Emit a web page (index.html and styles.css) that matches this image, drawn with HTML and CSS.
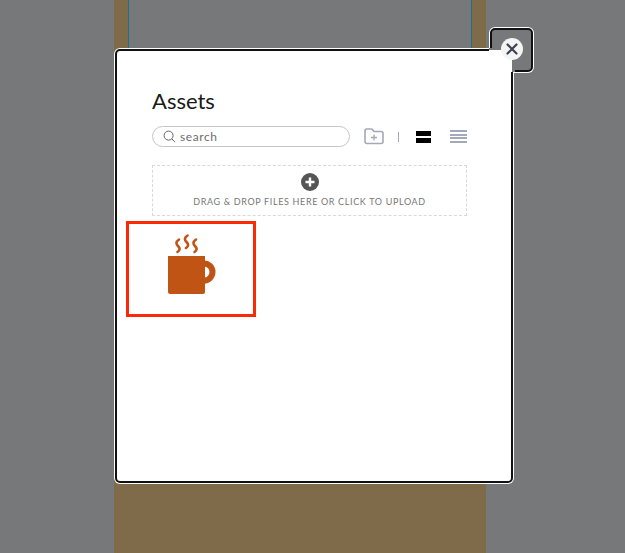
FILE: index.html
```html
<!DOCTYPE html>
<html lang="en">
<head>
    <meta charset="UTF-8">
    <meta name="viewport" content="width=device-width, initial-scale=1.0">
    <title>Assets</title>
    <link rel="stylesheet" href="styles.css">
</head>
<body>
    <div class="page">
        <div class="column">
            <div class="column-inner"></div>
        </div>
    </div>

    <div class="close-tab"></div>

    <div class="modal">
        <h1 class="modal-title">Assets</h1>

        <div class="toolbar">
            <div class="search">
                <svg width="13" height="13" viewBox="0 0 13 13"><circle cx="5.600" cy="5.600" r="4.500" stroke="#666" stroke-width="1" fill="none"/><path d="M9 9l3 3.200" stroke="#666" stroke-width="1" fill="none"/></svg>
                <span>search</span>
            </div>
            <svg class="folder" width="20" height="17" viewBox="0 0 20 17"><path d="M1 13.500V3A2 2 0 0 1 3 1h4.500a1 1 0 0 1 .8.4L10 3.500h7a2 2 0 0 1 2 2v8a2 2 0 0 1-2 2H3a2 2 0 0 1-2-2z" stroke="#a3a8ba" stroke-width="1.600" fill="none"/><path d="M10 6.500v6M7 9.500h6" stroke="#a3a8ba" stroke-width="1.300" fill="none"/></svg>
            <span class="divider"></span>
            <div class="view-large"><span></span><span></span></div>
            <div class="view-list"><span></span><span></span><span></span><span></span></div>
        </div>

        <div class="dropzone">
            <svg width="18" height="18" viewBox="0 0 18 18"><circle cx="9" cy="9" r="9" fill="#555"/><path d="M9 4.500v9M4.500 9h9" stroke="#fff" stroke-width="2.400"/></svg>
            <span>DRAG &amp; DROP FILES HERE OR CLICK TO UPLOAD</span>
        </div>

        <div class="asset">
            <svg width="48" height="61" viewBox="0 0 48 61">
                <g stroke="#c05415" stroke-width="2.600" fill="none" stroke-linecap="round">
                    <path d="M11 5.500c-3.500 2.500-3 4.500-1 6.500s2.500 4-.5 6"/>
                    <path d="M19.500 1.500c-3.500 2.500-3 4.500-1 6.500s2.500 4-.5 6"/>
                    <path d="M28 5.500c-3.500 2.500-3 4.500-1 6.500s2.500 4-.5 6"/>
                </g>
                <path d="M0 22h37v36a2 2 0 0 1-2 2H2a2 2 0 0 1-2-2z" fill="#c05415"/>
                <path d="M36 26.500a11.500 11.500 0 0 1 0 23v-6a5.500 5.500 0 0 0 0-11z" fill="#c05415"/>
            </svg>
        </div>
    </div>

    <button class="close-btn" type="button" aria-label="Close">
        <svg width="12" height="12" viewBox="0 0 12 12"><path d="M1.500 1.500l9 9M10.500 1.500l-9 9" stroke="#3b4252" stroke-width="2.200" stroke-linecap="round" fill="none"/></svg>
    </button>
</body>
</html>
```

FILE: styles.css
```css
* {
    margin: 0;
    padding: 0;
    box-sizing: border-box;
}

html, body {
    height: 100%;
    overflow: hidden;
}

body {
    font-family: 'Lato', sans-serif;
    background-color: #76787a;
}

/* Dimmed page behind the modal */
.page {
    height: 100%;
    padding-left: 114px;
}

.column {
    width: 372px;
    height: 100%;
    background-color: #7f6a4a;
}

.column-inner {
    width: 344px;
    height: 48px;
    margin: 0 auto;
    background-color: #76787a;
    border-left: 1px solid #1f6f8f;
    border-right: 1px solid #1f6f8f;
}

/* Modal */
.modal {
    position: absolute;
    left: 115px;
    top: 49px;
    width: 398px;
    height: 434px;
    background-color: #fff;
    border: 2px solid #111;
    border-radius: 5px;
    padding: 37px 34px 0 35px;
    box-shadow: 0 0 0 1px #fff;
}

/* Hides the modal border where the close tab joins it */
.modal::after {
    content: "";
    position: absolute;
    top: -3px;
    right: -4px;
    width: 23px;
    height: 22px;
    background-color: #fff;
    border-top: 2px solid #76787a;
    border-right: 3px solid #76787a;
}

.modal-title {
    font-size: 22px;
    font-weight: 400;
    line-height: 26px;
    color: #1a1a1a;
}

.toolbar {
    display: flex;
    align-items: center;
    margin-top: 12px;
}

.search {
    width: 198px;
    height: 21px;
    border: 1px solid #c4c6c9;
    border-radius: 11px;
    display: flex;
    align-items: center;
    gap: 4px;
    padding-left: 10px;
    font-size: 12px;
    letter-spacing: 0.6px;
    color: #6e6e6e;
}

.folder {
    margin-left: 14px;
}

.divider {
    width: 1px;
    height: 10px;
    margin-left: 14px;
    background-color: #a3a8ba;
}

.view-large {
    width: 15px;
    margin-left: 17px;
    display: flex;
    flex-direction: column;
    gap: 2px;
}

.view-large span {
    height: 5px;
    background-color: #000;
}

.view-list {
    width: 17px;
    margin-left: 19px;
    display: flex;
    flex-direction: column;
    gap: 1.500px;
}

.view-list span {
    height: 2px;
    background-color: #a3a8ba;
}

.dropzone {
    width: 315px;
    height: 51px;
    margin-top: 18px;
    border: 1px dashed #d9d9d9;
    display: flex;
    flex-direction: column;
    align-items: center;
    padding-top: 7px;
    gap: 5px;
    font-size: 9px;
    letter-spacing: 0.65px;
    color: #777;
}

.asset {
    width: 130px;
    height: 96px;
    margin: 5px 0 0 -26px;
    border: 3px solid #f92a05;
    padding: 10px 0 0 39px;
}

/* Close tab, sits behind the modal corner */
.close-tab {
    position: absolute;
    left: 490px;
    top: 28px;
    width: 43px;
    height: 44px;
    border: 2px solid #111;
    border-radius: 5px;
    box-shadow: 0 0 0 1px #fff;
    background-color: #76787a;
}

.close-btn {
    position: absolute;
    left: 501px;
    top: 38px;
    width: 22px;
    height: 22px;
    border: none;
    border-radius: 50%;
    background-color: #f4f4f4;
    display: flex;
    align-items: center;
    justify-content: center;
}
```
